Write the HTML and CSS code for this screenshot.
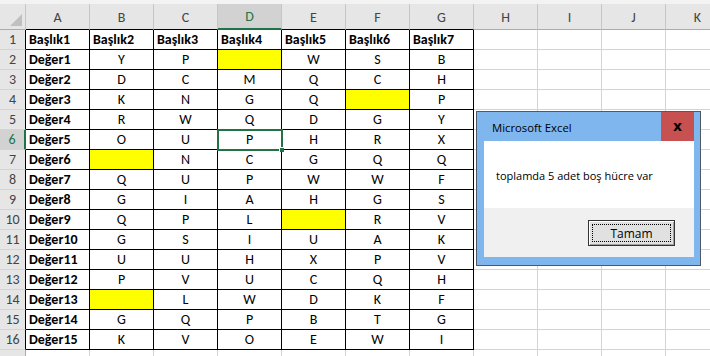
FILE: index.html
```html
<!DOCTYPE html>
<html lang="tr">
<head>
<meta charset="utf-8">
<title>Excel</title>
<link rel="stylesheet" href="styles.css">
</head>
<body>
<div class="sheet">
  <div class="strip"></div>
  <div class="corner"><span class="tri"></span></div>
  <div class="ch dk">A</div><div class="ch dk">B</div><div class="ch dk">C</div><div class="ch dk sel">D</div><div class="ch dk">E</div><div class="ch dk">F</div><div class="ch dk">G</div><div class="ch">H</div><div class="ch">I</div><div class="ch">J</div><div class="ch">K</div>

  <div class="rh dk">1</div><div class="c d b">Başlık1</div><div class="c d b">Başlık2</div><div class="c d b">Başlık3</div><div class="c d b">Başlık4</div><div class="c d b">Başlık5</div><div class="c d b">Başlık6</div><div class="c d b">Başlık7</div><div class="c"></div><div class="c"></div><div class="c"></div><div class="c"></div>
  <div class="rh dk">2</div><div class="c d b">Değer1</div><div class="c d">Y</div><div class="c d">P</div><div class="c d y"></div><div class="c d">W</div><div class="c d">S</div><div class="c d">B</div><div class="c"></div><div class="c"></div><div class="c"></div><div class="c"></div>
  <div class="rh dk">3</div><div class="c d b">Değer2</div><div class="c d">D</div><div class="c d">C</div><div class="c d">M</div><div class="c d">Q</div><div class="c d">C</div><div class="c d">H</div><div class="c"></div><div class="c"></div><div class="c"></div><div class="c"></div>
  <div class="rh dk">4</div><div class="c d b">Değer3</div><div class="c d">K</div><div class="c d">N</div><div class="c d">G</div><div class="c d">Q</div><div class="c d y"></div><div class="c d">P</div><div class="c"></div><div class="c"></div><div class="c"></div><div class="c"></div>
  <div class="rh dk">5</div><div class="c d b">Değer4</div><div class="c d">R</div><div class="c d">W</div><div class="c d">Q</div><div class="c d">D</div><div class="c d">G</div><div class="c d">Y</div><div class="c"></div><div class="c"></div><div class="c"></div><div class="c"></div>
  <div class="rh dk rsel">6</div><div class="c d b">Değer5</div><div class="c d">O</div><div class="c d">U</div><div class="c d active">P</div><div class="c d">H</div><div class="c d">R</div><div class="c d">X</div><div class="c"></div><div class="c"></div><div class="c"></div><div class="c"></div>
  <div class="rh dk">7</div><div class="c d b">Değer6</div><div class="c d y"></div><div class="c d">N</div><div class="c d">C</div><div class="c d">G</div><div class="c d">Q</div><div class="c d">Q</div><div class="c"></div><div class="c"></div><div class="c"></div><div class="c"></div>
  <div class="rh dk">8</div><div class="c d b">Değer7</div><div class="c d">Q</div><div class="c d">U</div><div class="c d">P</div><div class="c d">W</div><div class="c d">W</div><div class="c d">F</div><div class="c"></div><div class="c"></div><div class="c"></div><div class="c"></div>
  <div class="rh dk">9</div><div class="c d b">Değer8</div><div class="c d">G</div><div class="c d">I</div><div class="c d">A</div><div class="c d">H</div><div class="c d">G</div><div class="c d">S</div><div class="c"></div><div class="c"></div><div class="c"></div><div class="c"></div>
  <div class="rh dk">10</div><div class="c d b">Değer9</div><div class="c d">Q</div><div class="c d">P</div><div class="c d">L</div><div class="c d y"></div><div class="c d">R</div><div class="c d">V</div><div class="c"></div><div class="c"></div><div class="c"></div><div class="c"></div>
  <div class="rh dk">11</div><div class="c d b">Değer10</div><div class="c d">G</div><div class="c d">S</div><div class="c d">I</div><div class="c d">U</div><div class="c d">A</div><div class="c d">K</div><div class="c"></div><div class="c"></div><div class="c"></div><div class="c"></div>
  <div class="rh dk">12</div><div class="c d b">Değer11</div><div class="c d">U</div><div class="c d">U</div><div class="c d">H</div><div class="c d">X</div><div class="c d">P</div><div class="c d">V</div><div class="c"></div><div class="c"></div><div class="c"></div><div class="c"></div>
  <div class="rh dk">13</div><div class="c d b">Değer12</div><div class="c d">P</div><div class="c d">V</div><div class="c d">U</div><div class="c d">C</div><div class="c d">Q</div><div class="c d">H</div><div class="c"></div><div class="c"></div><div class="c"></div><div class="c"></div>
  <div class="rh dk">14</div><div class="c d b">Değer13</div><div class="c d y"></div><div class="c d">L</div><div class="c d">W</div><div class="c d">D</div><div class="c d">K</div><div class="c d">F</div><div class="c"></div><div class="c"></div><div class="c"></div><div class="c"></div>
  <div class="rh dk">15</div><div class="c d b">Değer14</div><div class="c d">G</div><div class="c d">Q</div><div class="c d">P</div><div class="c d">B</div><div class="c d">T</div><div class="c d">G</div><div class="c"></div><div class="c"></div><div class="c"></div><div class="c"></div>
  <div class="rh dk">16</div><div class="c d b">Değer15</div><div class="c d">K</div><div class="c d">V</div><div class="c d">O</div><div class="c d">E</div><div class="c d">W</div><div class="c d">I</div><div class="c"></div><div class="c"></div><div class="c"></div><div class="c"></div>
  <div class="rh"></div><div class="c"></div><div class="c"></div><div class="c"></div><div class="c"></div><div class="c"></div><div class="c"></div><div class="c"></div><div class="c"></div><div class="c"></div><div class="c"></div><div class="c"></div>
</div>

<div class="dlg">
  <div class="dlg-title">
    <span class="dlg-name">Microsoft Excel</span>
    <span class="dlg-close">x</span>
  </div>
  <div class="dlg-body">
    <div class="dlg-msg">toplamda 5 adet boş hücre var</div>
    <div class="dlg-foot">
      <button class="btn"><span class="btn-focus">Tamam</span></button>
    </div>
  </div>
</div>
</body>
</html>
```

FILE: styles.css
```css
html, body {
  margin: 0;
  padding: 0;
  background: #ffffff;
  overflow: hidden;
  width: 710px;
  height: 356px;
}

body {
  position: relative;
  font-family: "Carlito", "Lato", "Liberation Sans", sans-serif;
}

.sheet {
  display: grid;
  grid-template-columns: 26px repeat(11, 64px);
  grid-template-rows: 4px 26px repeat(17, 20px);
}

.strip {
  grid-column: 1 / -1;
  background: #f3f3f3;
}

.corner {
  position: relative;
  background: #e6e6e6;
  border-right: 1px solid #c6c6c6;
  border-bottom: 1px solid #ababab;
  box-sizing: border-box;
}

.tri {
  position: absolute;
  right: 3px;
  bottom: 3px;
  width: 0;
  height: 0;
  border-left: 12px solid transparent;
  border-bottom: 12px solid #c0c0c0;
}

.ch {
  background: #e6e6e6;
  color: #444444;
  font-size: 14px;
  border-right: 1px solid #c6c6c6;
  border-bottom: 1px solid #ababab;
  box-sizing: border-box;
  display: flex;
  align-items: center;
  justify-content: center;
  padding-top: 1px;
}

.ch.dk {
  border-bottom-color: #000000;
}

.ch.sel {
  background: #d2d2d2;
  color: #217346;
  border-bottom: 2px solid #217346;
}

.rh {
  background: #e6e6e6;
  color: #444444;
  font-size: 14px;
  border-right: 1px solid #ababab;
  border-bottom: 1px solid #d4d4d4;
  box-sizing: border-box;
  display: flex;
  align-items: center;
  justify-content: center;
}

.rh.dk {
  border-right-color: #000000;
}

.rh.rsel {
  background: #d2d2d2;
  color: #217346;
  border-right: 2px solid #217346;
}

.c {
  border-right: 1px solid #d4d4d4;
  border-bottom: 1px solid #d4d4d4;
  box-sizing: border-box;
  font-size: 14px;
  color: #000000;
  display: flex;
  align-items: center;
  justify-content: center;
  white-space: nowrap;
  overflow: visible;
}

.c.d {
  border-right-color: #000000;
  border-bottom-color: #000000;
}

.c.b {
  font-weight: 700;
  justify-content: flex-start;
  padding-left: 3px;
}

.c.y {
  background: #ffff00;
}

.c.active {
  position: relative;
  z-index: 2;
  outline: 2px solid #217346;
  outline-offset: -1px;
}

.c.active::after {
  content: "";
  position: absolute;
  right: -3px;
  bottom: -3px;
  width: 4px;
  height: 4px;
  background: #217346;
  border-left: 1px solid #ffffff;
  border-top: 1px solid #ffffff;
}

/* dialog */
.dlg {
  position: absolute;
  left: 476px;
  top: 111px;
  width: 225px;
  height: 155px;
  box-sizing: border-box;
  border: 1px solid #4d5a66;
  background: #7fb6ee;
  font-family: "Open Sans", "Noto Sans", sans-serif;
  display: flex;
  flex-direction: column;
  z-index: 10;
}

.dlg-title {
  height: 29px;
  display: flex;
  align-items: stretch;
  justify-content: space-between;
}

.dlg-name {
  padding-left: 15px;
  font-size: 11.3px;
  color: #000000;
  display: flex;
  align-items: center;
  padding-top: 2px;
}

.dlg-close {
  width: 33px;
  margin-right: 6px;
  background: #c75050;
  color: #000000;
  font-family: "DejaVu Sans", sans-serif;
  font-weight: 700;
  font-size: 14px;
  display: flex;
  align-items: center;
  justify-content: center;
  padding-bottom: 2px;
  box-sizing: border-box;
}

.dlg-body {
  margin: 0 6px 8px 7px;
  flex: 1;
  display: flex;
  flex-direction: column;
}

.dlg-msg {
  height: 67px;
  background: #ffffff;
  padding-left: 12px;
  font-size: 11px;
  color: #000000;
  display: flex;
  align-items: center;
  padding-top: 2px;
  box-sizing: border-box;
}

.dlg-foot {
  flex: 1;
  background: #f0f0f0;
  display: flex;
  justify-content: flex-end;
  align-items: flex-start;
  padding: 12px 19px 0 0;
}

.btn {
  width: 87px;
  height: 26px;
  padding: 3px;
  margin: 0;
  box-sizing: border-box;
  border: 1px solid #333333;
  background: #e1e1e1;
  box-shadow: inset 1px 1px 0 #ffffff, inset -1px -1px 0 #a0a0a0;
  font-family: "Open Sans", "Noto Sans", sans-serif;
  font-size: 12px;
  color: #000000;
  display: flex;
}

.btn-focus {
  flex: 1;
  border: 1px dotted #000000;
  display: flex;
  align-items: center;
  justify-content: center;
}
```
